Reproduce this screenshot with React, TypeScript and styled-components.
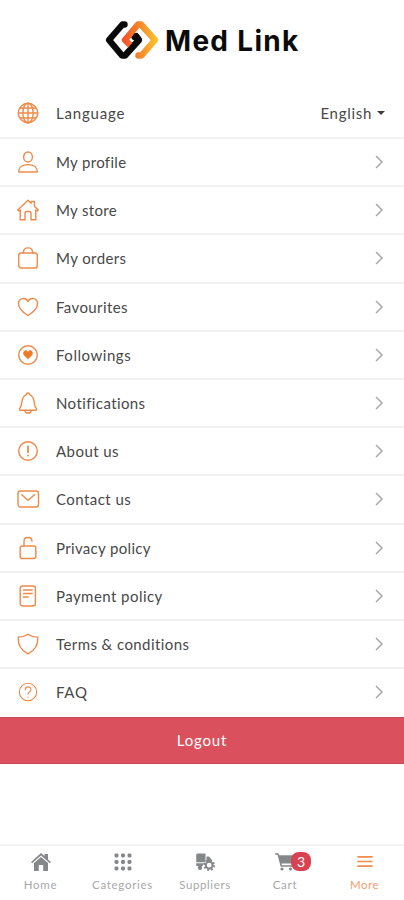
import React from 'react';
import styled, { createGlobalStyle } from 'styled-components';

const GlobalStyle = createGlobalStyle`
  * { box-sizing: border-box; }
  body { margin: 0; background: #fff; font-family: Lato, "Open Sans", sans-serif; }
`;

const Screen = styled.div`
  width: 404px;
  height: 900px;
  display: flex;
  flex-direction: column;
  background: #fff;
  overflow: hidden;
`;

const Header = styled.header`
  height: 91px;
  flex: none;
  display: flex;
  align-items: flex-start;
  padding: 20px 0 0 104px;
  gap: 5px;
`;

const Brand = styled.h1`
  margin: 3px 0 0;
  font: 700 28px/36px Inter, sans-serif;
  letter-spacing: 1.3px;
  color: #0b0b0b;
  white-space: nowrap;
`;

const Menu = styled.ul`
  list-style: none;
  margin: 0;
  padding: 0;
  flex: none;
`;

const Row = styled.li`
  height: 48.2px;
  display: flex;
  align-items: center;
  padding: 0 20px 0 17px;
  border-bottom: 2px solid #f1f1f1;
  &:first-child { height: 48px; padding: 0 19px 2px 17px; }
  &:last-child { height: 47.6px; border-bottom: 0; padding-bottom: 1px; }
`;

const RowIcon = styled.svg`
  width: 22px;
  height: 24px;
  flex: none;
  margin-right: 17px;
  overflow: visible;
  fill: none;
  stroke: #ee8a4a;
  stroke-width: 1.4;
  stroke-linecap: round;
  stroke-linejoin: round;
`;

const Label = styled.span<{ $spacing: number }>`
  flex: 1;
  font-size: 15px;
  line-height: 20px;
  letter-spacing: ${(p) => p.$spacing}px;
  color: #484848;
  white-space: nowrap;
`;

const Language = styled.span`
  display: flex;
  align-items: center;
  gap: 5px;
  font-size: 15px;
  line-height: 20px;
  letter-spacing: 0.7px;
  color: #484848;
`;

const Caret = styled.i`
  border: 4.5px solid transparent;
  border-top: 4.5px solid #3c3c3c;
  border-bottom: 0;
`;

const Chevron = styled.svg`
  width: 10px;
  height: 14px;
  fill: none;
  stroke: #a9a9a9;
  stroke-width: 1.5;
`;

const Logout = styled.button`
  height: 47px;
  flex: none;
  border: 0;
  border-top: 1px solid #d04655;
  border-bottom: 1px solid #d04655;
  padding: 0;
  background: #da515d;
  color: #fff;
  font: 400 15px/20px Lato, sans-serif;
  letter-spacing: 0.8px;
`;

const TabBar = styled.nav`
  margin-top: auto;
  height: 56px;
  flex: none;
  display: grid;
  grid-template-columns: 81px 83px 82px 78px 81px;
  border-top: 2px solid #f5f5f5;
`;

const Tab = styled.div<{ $active?: boolean }>`
  display: flex;
  flex-direction: column;
  align-items: center;
  padding-top: 6px;
  color: ${(p) => (p.$active ? '#f08b52' : '#85888a')};
`;

const TabIcon = styled.svg`
  width: 20px;
  height: 20px;
  fill: currentColor;
  overflow: visible;
`;

const TabLabel = styled.span<{ $active?: boolean; $spacing: number }>`
  margin-top: 5px;
  font-size: 11.5px;
  line-height: 16px;
  letter-spacing: ${(p) => p.$spacing}px;
  color: ${(p) => (p.$active ? '#f2a070' : '#a8a8a8')};
`;

const IconHolder = styled.div`
  position: relative;
  display: flex;
`;

const Badge = styled.span`
  position: absolute;
  left: 16px;
  top: 0;
  width: 20px;
  height: 19px;
  border-radius: 8px;
  background: #d94252;
  color: #fff;
  font-size: 14px;
  line-height: 20px;
  text-align: center;
`;

const Logo = () => (
  <svg width="56" height="41" viewBox="0 0 56 41" fill="none" strokeWidth="6.4" strokeLinejoin="round" strokeLinecap="round">
    <defs>
      <linearGradient id="flame" gradientUnits="userSpaceOnUse" x1="19" y1="20" x2="54" y2="20">
        <stop offset="0" stopColor="#f2522b" />
        <stop offset="0.5" stopColor="#f58a2c" />
        <stop offset="1" stopColor="#f8c832" />
      </linearGradient>
    </defs>
    <path d="M20.5 4.5 H18.5 L5 20 L18 35.5 H21 L35 20 L32 16 L30.5 17" stroke="#090909" />
    <path d="M25 24 L21 20 L34 4.5 H37 L51 20 L37.5 35.5 H34.5" stroke="url(#flame)" />
    <path d="M28 27.5 L35 20 L32 16" stroke="#090909" strokeWidth="5.6" />
  </svg>
);

const heart = 'M11 20.5 C7 18 1.5 13.5 1.5 8.7 C1.5 3.2 8.3 1.6 11 6.4 C13.7 1.6 20.5 3.2 20.5 8.7 C20.5 13.5 15 18 11 20.5Z';

type Item = { label: string; spacing: number; icon: React.ReactNode };

const items: Item[] = [
  {
    label: 'Language', spacing: 0.8,
    icon: <>
      <circle cx="11" cy="12" r="9.7" />
      <ellipse cx="11" cy="12" rx="5.2" ry="9.7" />
      <path d="M11 2.3V21.7M1.3 12H20.7M3 7H19M3 17H19" />
    </>,
  },
  { label: 'My profile', spacing: 0.33, icon: <><ellipse cx="11" cy="7" rx="4.4" ry="5" /><path d="M1.7 21.5C1.7 17.5 5 14.6 11 14.6S20.3 17.5 20.3 21.5Q20.3 22 19.7 22H2.3Q1.7 22 1.7 21.5Z" /></> },
  { label: 'My store', spacing: 0.33, icon: <path d="M.8 12 11 2.3 14.2 5.3V3.5H17.4V8.3L21.2 12 20 13.1 18.8 12V21.7H14V15.2Q14 13.5 12.4 13.5H9.6Q8 13.5 8 15.2V21.7H3.2V12L2 13.1Z" /> },
  { label: 'My orders', spacing: 0.4, icon: <><rect x="1.7" y="7" width="18.6" height="15" rx="2.5" /><path d="M6.3 7C6.5 .2 15.5 .2 15.7 7" /></> },
  { label: 'Favourites', spacing: 0.4, icon: <path d={heart} /> },
  { label: 'Followings', spacing: 0.53, icon: <><circle cx="11" cy="12" r="9.3" /><path transform="translate(5.7 5.9) scale(.48)" d={heart} fill="#ee7b24" /></> },
  { label: 'Notifications', spacing: 0.4, icon: <><path d="M9.3 3.6C9.3 1.4 12.7 1.4 12.7 3.6 19 6 16 13.5 18.7 16.5 20.3 18.3 19.5 19.2 18.5 19.2H3.5C2.5 19.2 1.7 18.3 3.3 16.5 6 13.5 3 6 9.3 3.6Z" /><path d="M8 19.8C8.5 22.8 13.5 22.8 14 19.8" /></> },
  { label: 'About us', spacing: 0.45, icon: <><circle cx="11" cy="12" r="9.3" /><path d="M11 7.3V13.3M11 16.3V16.5" strokeWidth="1.8" /></> },
  { label: 'Contact us', spacing: 0.45, icon: <><rect x="1" y="4" width="20.5" height="16" rx="2.5" /><path d="M4.8 7.7 11 13.3 17.5 7.7" /></> },
  { label: 'Privacy policy', spacing: 0.33, icon: <><rect x="3.2" y="10" width="15.6" height="12.5" rx="2" /><path d="M7 10V5.2C7 .2 14.6 .2 15 5.2" /></> },
  { label: 'Payment policy', spacing: 0.45, icon: <><rect x="3.2" y="2" width="15.2" height="20" rx="2.5" /><path d="M6.5 6H15.2M6.5 9.5H15.2M6.5 13H11.2" /></> },
  { label: 'Terms & conditions', spacing: 0.42, icon: <path d="M11 2.2C8 4.3 5 5 1.3 5.1 .7 13 3.5 18.2 11 21.8 18.5 18.2 21.3 13 20.7 5.1 17 5 14 4.3 11 2.2Z" /> },
  { label: 'FAQ', spacing: 0.7, icon: <><circle cx="11" cy="12" r="8.7" strokeWidth="1.1" /><path d="M8.2 9.7C8.2 6 14 6 14 9.5 14 12 11 11.8 11 14.3M11 17V17.2" strokeWidth="1.1" /></> },
];

const HomeIcon = () => (
  <TabIcon viewBox="0 0 20 20">
    <path d="M0 10 10 1 13.5 4.1V2H17V7.4L20 10 18.9 11.3 10 3.6 1.1 11.3Z" />
    <path d="M3 11 10 5 17 11V19H12.2V13H7.8V19H3Z" />
  </TabIcon>
);

const GridIcon = () => (
  <TabIcon viewBox="0 0 20 20">
    {[3.5, 10, 16.5].flatMap((y) => [3.5, 10, 16.5].map((x) => <rect key={`${x}-${y}`} x={x - 2} y={y - 2} width="4" height="4" rx="1.4" />))}
  </TabIcon>
);

const SupplierIcon = () => (
  <TabIcon viewBox="0 0 20 20">
    <path d="M2.5 1.5H10.5V10.3H1.2V3Q1.2 1.5 2.5 1.5ZM11.5 4.5H14L17 8V10H11.5ZM1.2 11.3H9L7.5 14H1.2Z" />
    <circle cx="5" cy="15.8" r="2.2" />
    <circle cx="14.2" cy="13.2" r="3.4" fill="none" stroke="currentColor" strokeWidth="2" />
    <circle cx="14.2" cy="13.2" r="4.9" fill="none" stroke="currentColor" strokeWidth="1.8" strokeDasharray="1.92 1.92" />
  </TabIcon>
);

const CartIcon = () => (
  <TabIcon viewBox="0 0 20 20">
    <path d="M0 1.3H3.6L4.2 3.3H19L16.8 11.5H6.5L6.9 13.2H17V14.7H5.7L2.5 2.8H0Z" />
    <circle cx="7" cy="17" r="1.6" /><circle cx="15.5" cy="17" r="1.6" />
  </TabIcon>
);

const MoreIcon = () => (
  <TabIcon viewBox="0 0 20 20"><path d="M2.4 4H17.6V5.7H2.4ZM2.4 8.7H17.6V10.3H2.4ZM2.4 13.3H17.6V15H2.4Z" /></TabIcon>
);

const tabs = [
  { label: 'Home', icon: <HomeIcon />, spacing: 0.7 },
  { label: 'Categories', icon: <GridIcon />, spacing: 0.7 },
  { label: 'Suppliers', icon: <SupplierIcon />, spacing: 0.6 },
  { label: 'Cart', icon: <CartIcon />, spacing: 0.7, badge: 3 },
  { label: 'More', icon: <MoreIcon />, spacing: 0.5, active: true },
];

export default function App() {
  return (
    <>
      <GlobalStyle />
      <Screen>
        <Header><Logo /><Brand>Med Link</Brand></Header>
        <Menu>
          {items.map((item, i) => (
            <Row key={item.label}>
              <RowIcon viewBox="0 0 22 24">{item.icon}</RowIcon>
              <Label $spacing={item.spacing}>{item.label}</Label>
              {i === 0
                ? <Language>English<Caret /></Language>
                : <Chevron viewBox="0 0 10 14"><path d="M2 1 8 7 2 13" /></Chevron>}
            </Row>
          ))}
        </Menu>
        <Logout>Logout</Logout>
        <TabBar>
          {tabs.map((tab) => (
            <Tab key={tab.label} $active={tab.active}>
              <IconHolder>{tab.icon}{tab.badge && <Badge>{tab.badge}</Badge>}</IconHolder>
              <TabLabel $active={tab.active} $spacing={tab.spacing}>{tab.label}</TabLabel>
            </Tab>
          ))}
        </TabBar>
      </Screen>
    </>
  );
}
